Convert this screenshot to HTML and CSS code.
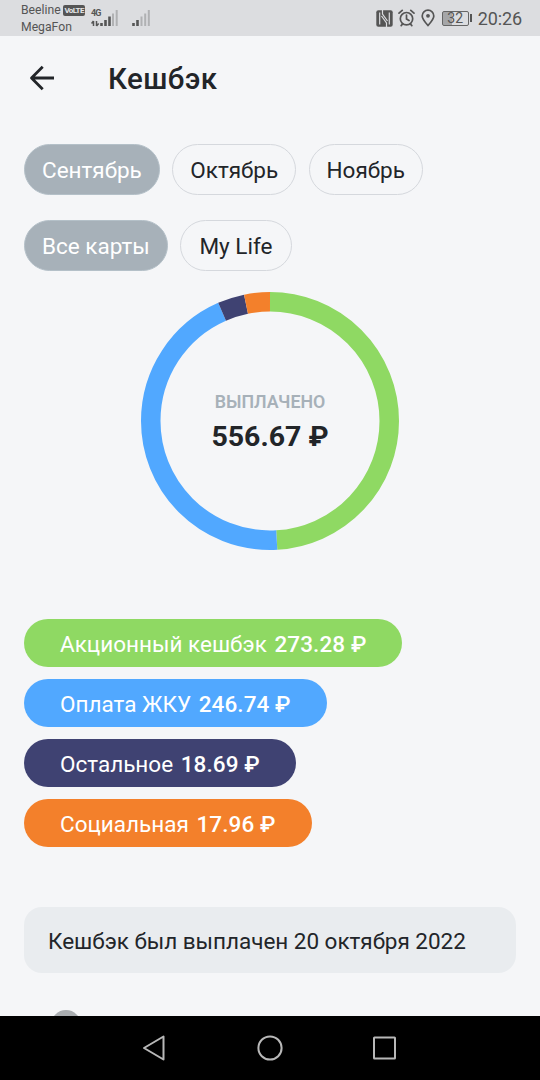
FILE: index.html
```html
<!DOCTYPE html>
<html lang="ru">
<head>
  <meta charset="UTF-8"/>
  <meta name="viewport" content="width=device-width, initial-scale=1.0"/>
  <title>Кешбэк</title>
  <link rel="stylesheet" href="styles.css">
</head>
<body>

<div class="statusbar">
  <div class="carriers">
    <div class="carrier">Beeline <span class="volte">VoLTE</span></div>
    <div class="carrier">MegaFon</div>
  </div>
  <div class="net">
    <span class="net-type">4G</span>
    <svg class="signal" width="27" height="18" viewBox="0 0 27 18">
      <path d="M2.500 12v5M.5 14.500 2.500 12M5.500 12V17M7.700 14.500 5.500 17" stroke="#555" stroke-width="1.500" fill="none"/>
      <path d="M10.500 14v3M14.500 11v6M18.500 7.500v9.500" stroke="#555" stroke-width="2.600"/>
      <path d="M22 4.500v12.500M25.700 1v16" stroke="#b0b1b3" stroke-width="2"/>
    </svg>
  </div>
  <svg class="signal2" width="18" height="18" viewBox="0 0 18 18">
    <path d="M1.500 14v3M5.500 11v6" stroke="#555" stroke-width="2.600"/>
    <path d="M9.500 7.500v9.500M13.200 4.500v12.500M16.800 1v16" stroke="#b0b1b3" stroke-width="2"/>
  </svg>
  <div class="status-icons">
    <svg width="17" height="17" viewBox="0 0 17 17">
      <rect x=".3" y=".3" width="16.400" height="16.400" rx="2" fill="#555"/>
      <path d="M3.700 14.500V2.500M13.300 2.500v12M6.500 0v4l5 7M10.500 17v-4l-5-7" fill="none" stroke="#dcdde0" stroke-width="1.200"/>
    </svg>
    <svg width="17" height="18" viewBox="0 0 17 18" fill="none" stroke="#555" stroke-width="1.700" stroke-linecap="round">
      <circle cx="8.500" cy="9.700" r="6.200"/>
      <path d="M8.500 6v4l2.500 1.500M1 4.200 4.200 1.400M16 4.200 12.800 1.400M4.500 15 3.200 16.600M12.500 15l1.300 1.600"/>
    </svg>
    <svg width="14" height="18" viewBox="0 0 14 18" fill="none" stroke="#555" stroke-width="1.700">
      <path d="M7 16.500C4 13 1.200 10 1.200 6.900a5.800 5.800 0 0 1 11.600 0C12.800 10 10 13 7 16.500z"/>
      <circle cx="7" cy="6.800" r="1.900" fill="#555" stroke="none"/>
    </svg>
    <div class="battery"><span>32</span></div>
    <div class="clock">20:26</div>
  </div>
</div>

<header>
  <svg class="back" width="26" height="26" viewBox="0 0 26 26" fill="none" stroke="#222529" stroke-width="2.800" stroke-linejoin="round">
    <path d="M25 13H2.500M13.700 1.800 2.500 13l11.200 11.200"/>
  </svg>
  <h1>Кешбэк</h1>
</header>

<main>
  <div class="chips">
    <button class="chip active">Сентябрь</button>
    <button class="chip">Октябрь</button>
    <button class="chip">Ноябрь</button>
  </div>
  <div class="chips">
    <button class="chip active">Все карты</button>
    <button class="chip chip-en">My Life</button>
  </div>

  <div class="chart">
    <!-- pathLength = total sum, so every dash is the amount in rubles -->
    <svg width="258" height="258" viewBox="0 0 258 258">
      <g fill="none" stroke-width="19.500" transform="rotate(-90 129 129)">
        <circle cx="129" cy="129" r="119.250" pathLength="556.67" stroke="#8fd963" stroke-dasharray="273.28 283.39"/>
        <circle cx="129" cy="129" r="119.250" pathLength="556.67" stroke="#51a8ff" stroke-dasharray="246.74 309.93" stroke-dashoffset="-273.28"/>
        <circle cx="129" cy="129" r="119.250" pathLength="556.67" stroke="#3f4272" stroke-dasharray="18.69 537.98" stroke-dashoffset="-520.02"/>
        <circle cx="129" cy="129" r="119.250" pathLength="556.67" stroke="#f3802b" stroke-dasharray="17.96 538.71" stroke-dashoffset="-538.71"/>
      </g>
    </svg>
    <div class="total">
      <div class="total-label">ВЫПЛАЧЕНО</div>
      <div class="total-sum">556.67 ₽</div>
    </div>
  </div>

  <div class="legend">
    <div class="tag green">Акционный кешбэк <b>273.28 ₽</b></div>
    <div class="tag blue">Оплата ЖКУ <b>246.74 ₽</b></div>
    <div class="tag navy">Остальное <b>18.69 ₽</b></div>
    <div class="tag orange">Социальная <b>17.96 ₽</b></div>
  </div>

  <div class="notice">Кешбэк был выплачен 20 октября 2022</div>
  <div class="item-icon"></div>
</main>

<nav class="navbar">
  <svg width="26" height="26" viewBox="0 0 26 26"><path d="M21.500 1.500v23L2 13z"/></svg>
  <svg width="26" height="26" viewBox="0 0 26 26"><circle cx="13" cy="13" r="11.600"/></svg>
  <svg width="26" height="26" viewBox="0 0 26 26"><rect x="2" y="2.500" width="21" height="21" rx=".5"/></svg>
</nav>

</body>
</html>
```

FILE: styles.css
```css
*,*::before,*::after{box-sizing:border-box;margin:0;padding:0;}
body{font-family:Roboto,sans-serif;background:#f5f6f8;color:#222529;width:540px;height:1080px;overflow:hidden;display:flex;flex-direction:column;}
svg{display:block;flex:none;}

.statusbar{height:36px;flex:none;background:#dcdde0;color:#555;display:flex;align-items:flex-start;padding:0 18px 0 21px;}
.carriers{width:70px;padding-top:2px;}
.carrier{font-size:12.2px;line-height:17px;white-space:nowrap;display:flex;align-items:center;gap:2.5px;}
.volte{background:#555;color:#e6e7e9;font-size:8px;font-weight:700;line-height:11px;height:11px;width:22px;border-radius:2px;text-align:center;letter-spacing:-.6px;}
.net{position:relative;width:27px;padding-top:9px;}
.net-type{position:absolute;left:0;top:8px;font-size:9px;line-height:11px;font-weight:700;letter-spacing:-.8px;}
.signal2{margin:9px 0 0 14px;}
.status-icons{margin-left:auto;height:36px;display:flex;align-items:center;gap:5.5px;}
.battery{width:27px;height:15px;margin:0 3.5px 0 1.5px;border:1.5px solid #666;border-radius:2px;position:relative;background:linear-gradient(90deg,#a5a6a8 34%,transparent 34%);font-size:14px;line-height:13px;text-align:center;}
.battery::after{content:"";position:absolute;right:-4px;top:2px;width:2px;height:8px;background:#555;}
.clock{font-size:18px;line-height:20px;padding-top:1px;letter-spacing:-.1px;}

header{height:84px;flex:none;display:flex;align-items:center;padding-left:29px;}
header h1{font-size:29.5px;font-weight:500;line-height:36px;margin-left:53px;padding-top:2px;letter-spacing:.4px;}

main{flex:1;min-height:0;padding:24px 24px 0;overflow:hidden;}
.chips{display:flex;gap:12.4px;margin-bottom:24.5px;}
.chip{height:51px;padding:1px 17px 0;border:1.5px solid #d5d8dd;border-radius:26px;background:none;color:#222529;font:400 22.5px Roboto,sans-serif;white-space:nowrap;}
.chip.active{padding:1px 17px 0;background:#a7b1b9;border-color:#b4c0c8;color:#fff;}
.chip-en{padding:1px 18.3px 0;}

.chart{position:relative;width:258px;height:258px;margin:-3.5px auto 0;}
.total{position:absolute;inset:0;display:flex;flex-direction:column;align-items:center;justify-content:center;padding-top:8px;}
.total-label{font-size:17.8px;font-weight:600;line-height:24px;color:#a7b1b9;}
.total-sum{font-size:28.5px;font-weight:700;line-height:46px;}

.legend{display:flex;flex-direction:column;align-items:flex-start;gap:12px;margin-top:69px;}
.tag{height:48px;line-height:50px;padding:0 36px;border-radius:24px;color:#fff;font-size:22.5px;white-space:nowrap;}
.tag b{font-weight:500;margin-left:2px;letter-spacing:.1px;}
.green{background:#8fd963;}
.blue{background:#51a8ff;}
.navy{background:#3f4272;}
.orange{background:#f3802b;}

.notice{margin-top:60px;height:66px;line-height:68px;padding:0 24px;border-radius:18px;background:#e9ecef;font-size:22.5px;letter-spacing:-.03px;white-space:nowrap;}
.item-icon{width:30px;height:30px;margin:37px 0 0 27px;border-radius:50%;background:#a9adb0;}

.navbar{height:64px;flex:none;background:#000;display:flex;align-items:center;justify-content:center;gap:89px;}
.navbar svg{fill:none;stroke:#b8b8b8;stroke-width:2;stroke-linejoin:round;}
```
